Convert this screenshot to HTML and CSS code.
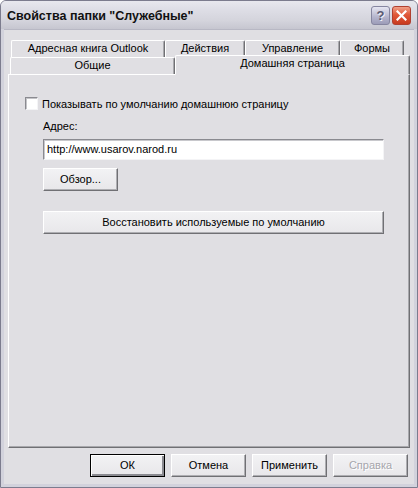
FILE: index.html
```html
<!DOCTYPE html>
<html lang="ru">
<head>
<meta charset="utf-8">
<title>Свойства папки</title>
<link rel="stylesheet" href="styles.css">
</head>
<body>
<div class="window">
  <div class="titlebar">
    <span class="title">Свойства папки "Служебные"</span>
    <div class="caption-btns">
      <div class="cap-btn help"><span>?</span></div>
      <div class="cap-btn close">
        <svg width="11" height="11" viewBox="0 0 11 11"><path d="M1.5 1.5 L9.5 9.5 M9.5 1.5 L1.5 9.5" stroke="#fff" stroke-width="2.2" stroke-linecap="square"/></svg>
      </div>
    </div>
  </div>
  <div class="client">
    <div class="tabs">
      <div class="tabrow back">
        <div class="tab t-outlook">Адресная книга Outlook</div>
        <div class="tab t-actions">Действия</div>
        <div class="tab t-manage">Управление</div>
        <div class="tab t-forms">Формы</div>
      </div>
      <div class="tabrow front">
        <div class="tab t-general">Общие</div>
        <div class="tab t-home selected">Домашняя страница</div>
      </div>
    </div>
    <div class="panel">
      <div class="check-row">
        <span class="checkbox"></span>
        <span class="check-label">Показывать по умолчанию домашнюю страницу</span>
      </div>
      <div class="field-block">
        <div class="field-label">Адрес:</div>
        <div class="textbox">http://www.usarov.narod.ru</div>
        <div class="btn btn-browse">Обзор...</div>
        <div class="btn btn-restore">Восстановить используемые по умолчанию</div>
      </div>
    </div>
    <div class="footer">
      <div class="btn default">ОК</div>
      <div class="btn">Отмена</div>
      <div class="btn">Применить</div>
      <div class="btn disabled">Справка</div>
    </div>
  </div>
</div>
</body>
</html>
```

FILE: styles.css
```css
* { box-sizing: border-box; }
html, body { margin: 0; padding: 0; background: #ffffff; }
body {
  font-family: "Liberation Sans", Arial, sans-serif;
  font-size: 11px;
  color: #000;
}
.window {
  width: 418px;
  height: 488px;
  border: 1px solid #7c7c8e;
  border-radius: 6px 6px 0 0;
  background: #d2d2dc;
  padding: 0 3px 3px 3px;
  display: flex;
  flex-direction: column;
}
.titlebar {
  height: 28px;
  margin: 0 -3px;
  padding: 0 6px 0 6px;
  border-radius: 5px 5px 0 0;
  background: linear-gradient(to bottom, #e8e8ee 0%, #dedee6 30%, #d4d4dc 70%, #c6c6d0 100%);
  display: flex;
  align-items: center;
  justify-content: space-between;
}
.title {
  font-weight: bold;
  font-size: 12.5px;
  color: #111;
  padding-top: 2px;
}
.caption-btns {
  display: flex;
  gap: 2px;
  padding-top: 1px;
}
.cap-btn {
  width: 19px;
  height: 19px;
  border-radius: 3px;
  display: flex;
  align-items: center;
  justify-content: center;
}
.cap-btn.help {
  border: 1px solid #8686a0;
  background: linear-gradient(to bottom, #e6e6f2 0%, #b4b4cc 60%, #9c9cb8 100%);
}
.cap-btn.help span {
  font-weight: bold;
  font-size: 13px;
  color: #5a5a72;
  text-shadow: 1px 1px 0 #f0f0f8;
}
.cap-btn.close {
  border: 1px solid #b04030;
  background: linear-gradient(to bottom, #f0a088 0%, #e05838 45%, #c83a20 100%);
}
.client {
  flex: 1;
  background: #e0dfe3;
  border-top: 1px solid #b8b8c4;
  padding: 10px 4px 0 4px;
  display: flex;
  flex-direction: column;
}
.tabs {
  display: flex;
  flex-direction: column;
}
.tabrow {
  display: flex;
  height: 17px;
}
.tabrow.back { padding-left: 3px; }
.tabrow.front { padding-left: 2px; }
.tab {
  height: 17px;
  border-top: 1px solid #ffffff;
  border-left: 1px solid #ffffff;
  border-right: 1px solid #707074;
  border-radius: 2px 2px 0 0;
  box-shadow: inset -1px 0 0 #a8a8ac;
  background: #e0dfe3;
  text-align: center;
  line-height: 15px;
  white-space: nowrap;
}
.t-outlook { width: 154px; }
.t-actions { width: 80px; }
.t-manage { width: 95px; }
.t-forms { width: 64px; }
.t-general { width: 165px; }
.tab.selected {
  width: 235px;
  height: 20px;
  margin-top: -2px;
  position: relative;
  z-index: 2;
  line-height: 15px;
  border-bottom: 1px solid #e0dfe3;
}
.panel {
  height: 374px;
  border-top: 1px solid #ffffff;
  border-left: 1px solid #ffffff;
  border-right: 1px solid #707074;
  border-bottom: 1px solid #707074;
  box-shadow: inset -1px -1px 0 #a8a8ac;
  padding: 22px 0 0 16px;
}
.check-row {
  display: flex;
  align-items: center;
  gap: 4px;
  height: 13px;
}
.checkbox {
  width: 13px;
  height: 13px;
  background: #fff;
  border-top: 1px solid #8a8a90;
  border-left: 1px solid #8a8a90;
  border-right: 1px solid #f4f4f6;
  border-bottom: 1px solid #f4f4f6;
  box-shadow: inset 1px 1px 0 #c4c4c8;
}
.field-block {
  margin-left: 18px;
  margin-top: 10px;
  display: flex;
  flex-direction: column;
  align-items: flex-start;
}
.field-label { line-height: 13px; }
.textbox {
  margin-top: 6px;
  width: 341px;
  height: 21px;
  background: #fff;
  border-top: 1px solid #8a8a90;
  border-left: 1px solid #8a8a90;
  border-right: 1px solid #f4f4f6;
  border-bottom: 1px solid #f4f4f6;
  box-shadow: inset 1px 1px 0 #c8c8cc;
  padding-left: 3px;
  line-height: 19px;
}
.btn {
  width: 75px;
  height: 23px;
  background: linear-gradient(to bottom, #f2f2f4 0%, #e8e7ea 100%);
  border-top: 1px solid #ffffff;
  border-left: 1px solid #ffffff;
  border-right: 1px solid #707074;
  border-bottom: 1px solid #707074;
  box-shadow: inset -1px -1px 0 #aeaeb2;
  text-align: center;
  line-height: 21px;
  white-space: nowrap;
}
.btn-browse { margin-top: 8px; }
.btn-restore { margin-top: 20px; width: 341px; }
.footer {
  display: flex;
  justify-content: flex-end;
  gap: 6px;
  padding-right: 2px;
  margin-top: 6px;
}
.btn.default {
  border: 1px solid #000;
  box-shadow: inset 1px 1px 0 #ffffff, inset -2px -2px 0 #8a8a90;
}
.btn.disabled {
  color: #a6a6ac;
  text-shadow: 1px 1px 0 #ffffff;
}
```
